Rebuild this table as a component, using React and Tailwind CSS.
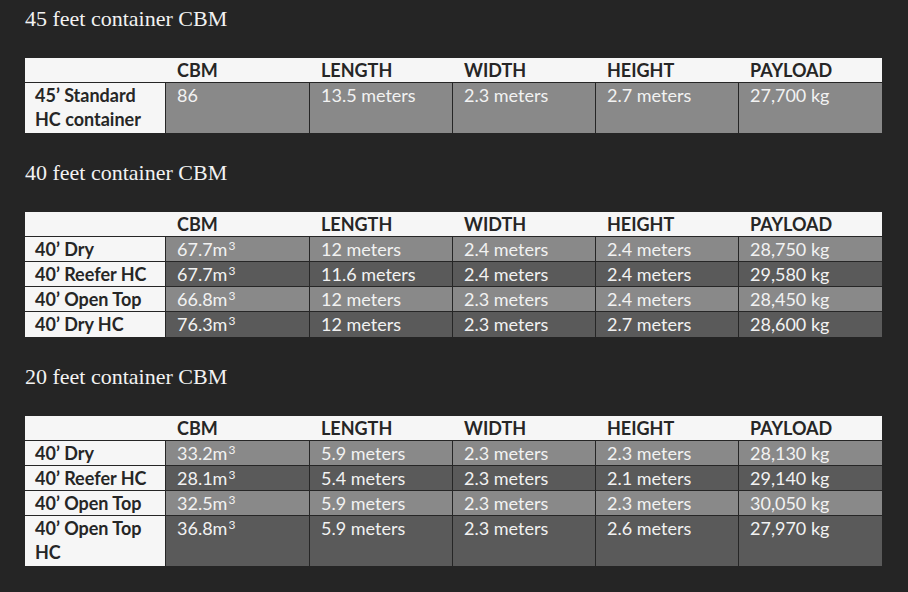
import React from 'react';

const HEADERS = ['CBM', 'LENGTH', 'WIDTH', 'HEIGHT', 'PAYLOAD'];

const SECTIONS = [
  {
    title: '45 feet container CBM',
    rows: [
      { name: ['45’ Standard', 'HC container'], cbm: '86', sup: false, vals: ['13.5 meters', '2.3 meters', '2.7 meters', '27,700 kg'], tone: 'light' },
    ],
  },
  {
    title: '40 feet container CBM',
    rows: [
      { name: ['40’ Dry'], cbm: '67.7m', sup: true, vals: ['12 meters', '2.4 meters', '2.4 meters', '28,750 kg'], tone: 'light' },
      { name: ['40’ Reefer HC'], cbm: '67.7m', sup: true, vals: ['11.6 meters', '2.4 meters', '2.4 meters', '29,580 kg'], tone: 'dark' },
      { name: ['40’ Open Top'], cbm: '66.8m', sup: true, vals: ['12 meters', '2.3 meters', '2.4 meters', '28,450 kg'], tone: 'light' },
      { name: ['40’ Dry HC'], cbm: '76.3m', sup: true, vals: ['12 meters', '2.3 meters', '2.7 meters', '28,600 kg'], tone: 'dark' },
    ],
  },
  {
    title: '20 feet container CBM',
    rows: [
      { name: ['40’ Dry'], cbm: '33.2m', sup: true, vals: ['5.9 meters', '2.3 meters', '2.3 meters', '28,130 kg'], tone: 'light' },
      { name: ['40’ Reefer HC'], cbm: '28.1m', sup: true, vals: ['5.4 meters', '2.3 meters', '2.1 meters', '29,140 kg'], tone: 'dark' },
      { name: ['40’ Open Top'], cbm: '32.5m', sup: true, vals: ['5.9 meters', '2.3 meters', '2.3 meters', '30,050 kg'], tone: 'light' },
      { name: ['40’ Open Top', 'HC'], cbm: '36.8m', sup: true, vals: ['5.9 meters', '2.3 meters', '2.6 meters', '27,970 kg'], tone: 'dark' },
    ],
  },
];

const cell = 'border-r border-b border-[#262626] pl-[11px] leading-[24px] text-[#f2f2f2]';

const Table = ({ rows }) => (
  <div className="grid w-[857px] grid-cols-[141px_144px_143px_143px_143px_143px] font-['Lato',sans-serif] text-[18px]">
    <div className="h-[25px] border-b border-[#262626] bg-[#f6f6f6]" />
    {HEADERS.map((h) => (
      <div key={h} className="h-[25px] border-b border-[#262626] bg-[#f6f6f6] pl-[11px] leading-[24px] font-bold text-[#262626]">
        {h}
      </div>
    ))}
    {rows.map((row, i) => {
      const bg = row.tone === 'light' ? 'bg-[#898989]' : 'bg-[#5a5a5a]';
      const last = i === rows.length - 1;
      const h = row.name.length > 1 ? 'h-[50px]' : 'h-[25px]';
      return (
        <React.Fragment key={i}>
          <div className={`${h} border-r border-[#262626] bg-[#f6f6f6] pl-[10px] leading-[24px] font-bold text-[#262626] ${last ? '' : 'border-b'}`}>
            {row.name.map((n) => (
              <div key={n}>{n}</div>
            ))}
          </div>
          <div className={`${h} ${cell} ${bg} ${last ? 'border-b-0' : ''}`}>
            {row.cbm}
            {row.sup && <span className="relative top-[-6px] ml-[1px] text-[12px]">3</span>}
          </div>
          {row.vals.map((v, j) => (
            <div key={j} className={`${h} ${cell} ${bg} ${last ? 'border-b-0' : ''} ${j === 3 ? 'border-r-0' : ''}`}>
              {v}
            </div>
          ))}
        </React.Fragment>
      );
    })}
  </div>
);

export default function App() {
  return (
    <div className="min-h-[592px] w-[908px] bg-[#252525] pl-[25px] pt-[4px]">
      {SECTIONS.map((s, i) => (
        <section key={s.title} className={i === 0 ? '' : 'mt-[25px]'}>
          <h2 className="mb-[24px] font-['Liberation_Serif',serif] text-[22px] leading-[30px] text-[#f2f2f2]">{s.title}</h2>
          <Table rows={s.rows} />
        </section>
      ))}
    </div>
  );
}
